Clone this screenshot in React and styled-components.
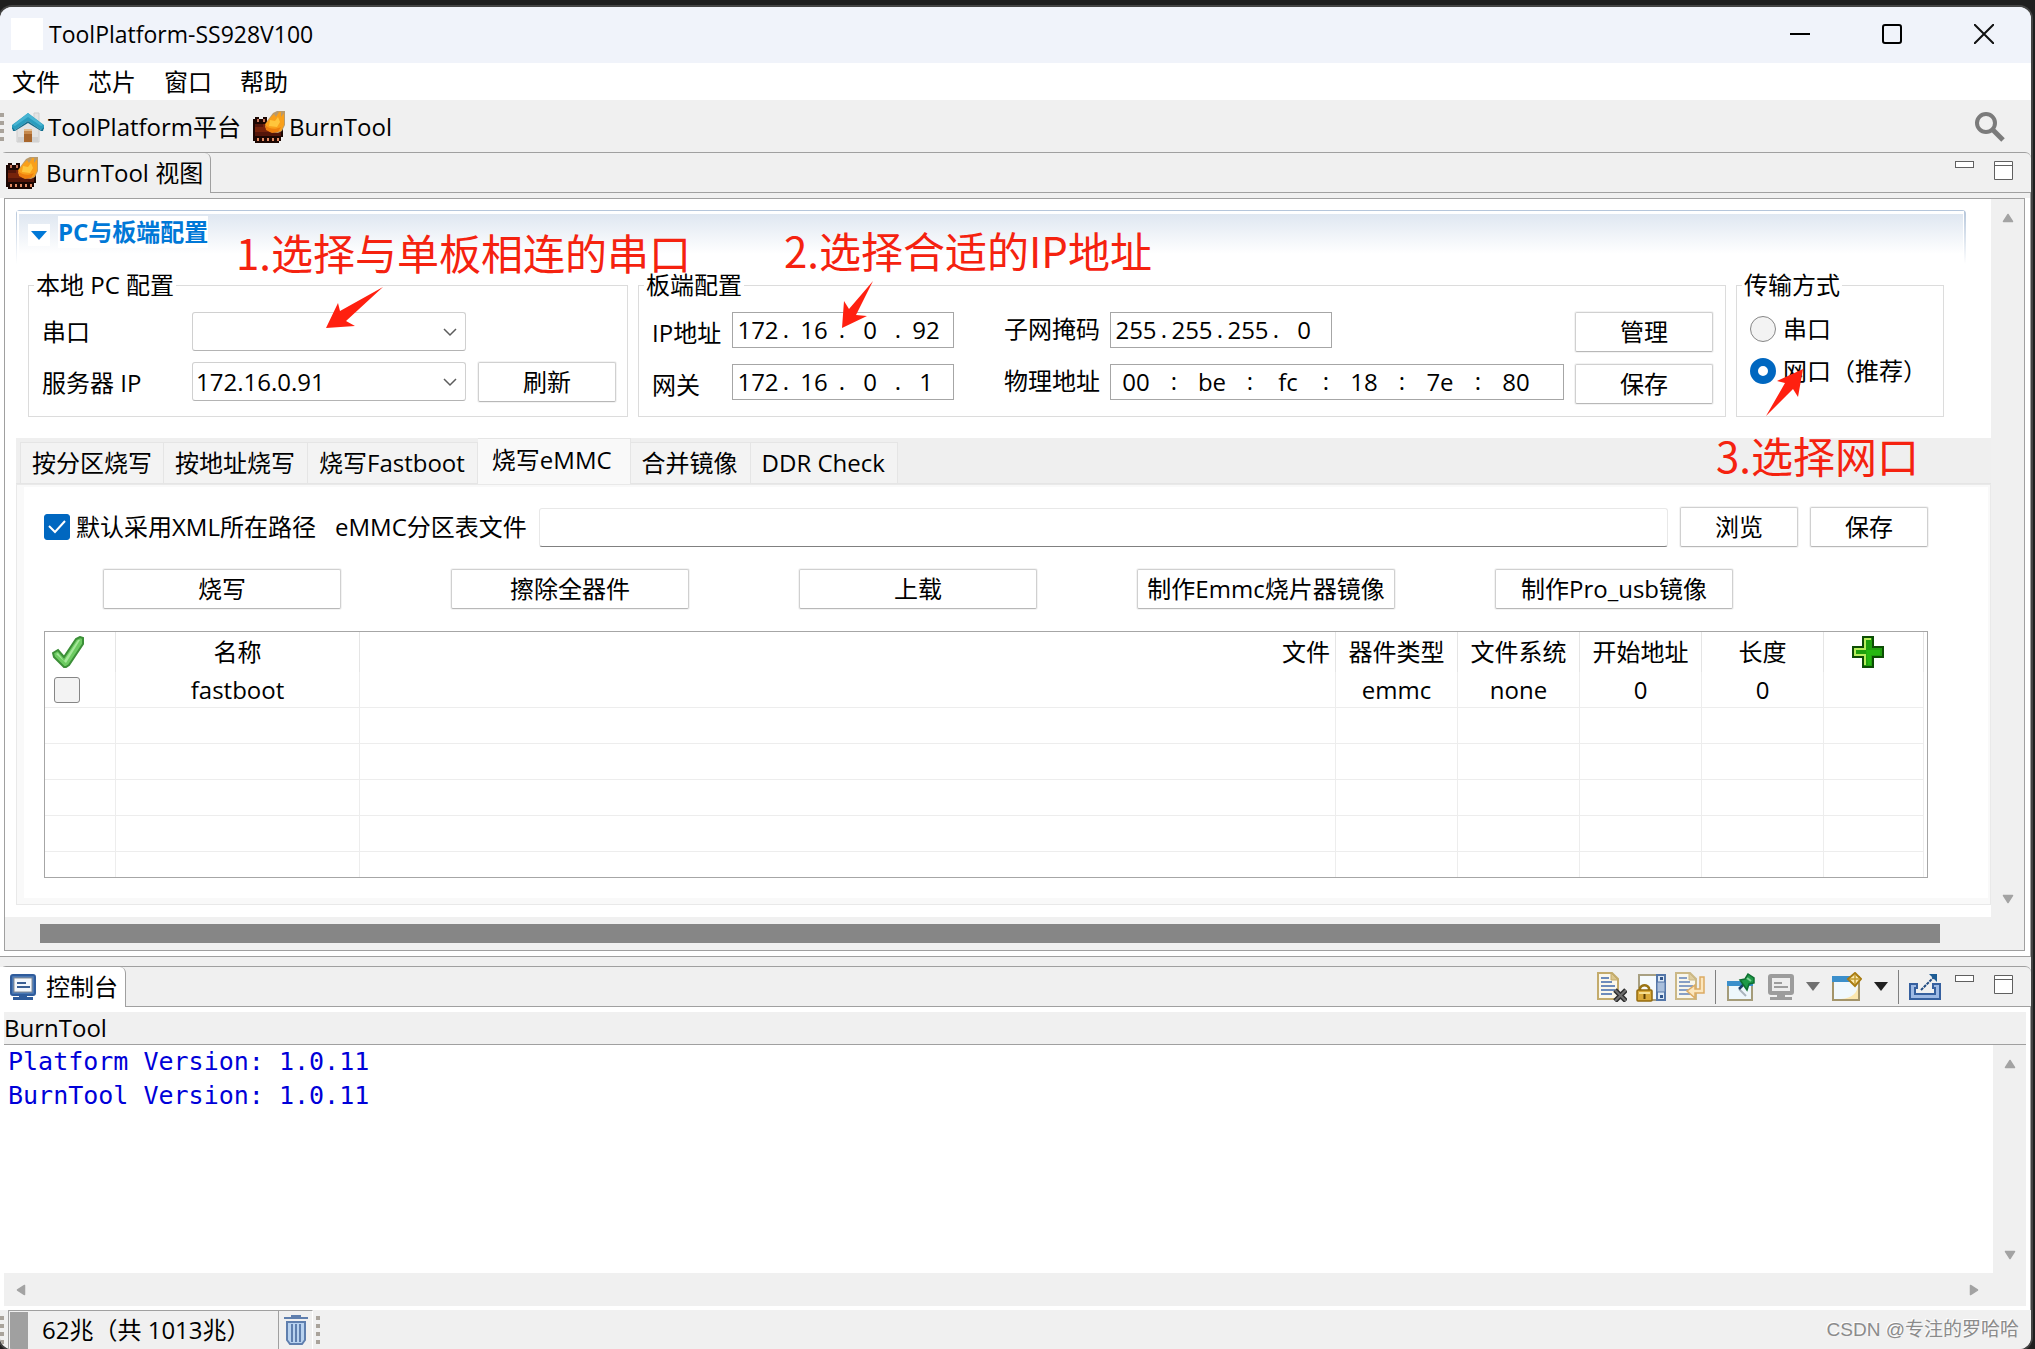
import React, { useState } from "react";
import styled, { createGlobalStyle, css } from "styled-components";

const GlobalStyle = createGlobalStyle`
  * { box-sizing: border-box; }
  html, body { margin: 0; background: #1f1f1f; }
  body, button, input, select {
    font-family: "Open Sans", "Noto Sans CJK SC", sans-serif;
    font-size: 24px;
    color: #000;
  }
`;

/* ---------- window frame ---------- */

const Desktop = styled.div`
  display: flex;
  min-height: 100vh;
  padding: 7px 4px 0 0;
  background: #1f1f1f;
`;

const Window = styled.div`
  flex: 1;
  min-width: 0;
  display: flex;
  flex-direction: column;
  background: #f0f0f0;
  border-radius: 12px;
  overflow: hidden;
  box-shadow: 0 0 0 2px #444;
`;

const TitleBar = styled.header`
  display: flex;
  align-items: center;
  height: 56px;
  padding: 0 17px 2px 11px;
  gap: 6px;
  background: #f0f3fa;
`;

const AppIcon = styled.span`
  width: 32px;
  height: 32px;
  background: #fff;
`;

const AppTitle = styled.h1`
  flex: 1;
  margin: 0;
  font-size: 23px;
  line-height: 34px;
  font-weight: 400;
`;

const WindowButtons = styled.div`
  display: flex;
  gap: 32px;
`;

const IconButton = styled.button`
  display: flex;
  align-items: center;
  justify-content: center;
  flex: none;
  width: ${(p) => p.$w || 32}px;
  height: ${(p) => p.$h || 32}px;
  padding: 0;
  border: 0;
  background: none;
`;

const MenuBar = styled.nav`
  display: flex;
  gap: 28px;
  height: 37px;
  padding: 0 12px;
  background: #fff;
`;

const MenuItem = styled.button`
  padding: 0;
  border: 0;
  background: none;
  line-height: 37px;
`;

const Toolbar = styled.div`
  display: flex;
  align-items: center;
  gap: 8px;
  height: 52px;
  padding: 2px 25px 0 0;
`;

const Grip = styled.span`
  width: 4px;
  height: 28px;
  background: repeating-linear-gradient(#a9a39b 0 4px, transparent 4px 8px);
`;

const ToolButton = styled.button`
  display: flex;
  align-items: center;
  gap: 4px;
  padding: 0 4px 0 0;
  border: 0;
  background: none;
  line-height: 36px;
`;

const Spacer = styled.span`
  flex: 1;
`;

/* ---------- view stacks ---------- */

const TabStrip = styled.div`
  display: flex;
  height: 41px;
  border-top: 1px solid #a0a0a0;
  border-radius: 6px 6px 0 0;
`;

const ViewTab = styled.div`
  display: flex;
  align-items: center;
  gap: ${(p) => p.$gap}px;
  padding: 0 7px 0 ${(p) => p.$left}px;
  border-right: 1px solid #a0a0a0;
  border-radius: 0 6px 0 0;
  background: ${(p) => p.$bg};
  line-height: 36px;
`;

const StripRest = styled.div`
  flex: 1;
  display: flex;
  align-items: center;
  justify-content: flex-end;
  gap: 10px;
  padding-right: 18px;
  border-bottom: 1px solid #a0a0a0;
`;

const StripSeparator = styled.span`
  width: 1px;
  height: 34px;
  background: #808080;
`;

const PaneButtons = styled.div`
  display: flex;
  gap: 20px;
  align-self: flex-start;
  padding: 8px 0 0 4px;
`;

const ViewBody = styled.div`
  padding: 5px 5px 5px 4px;
  background: linear-gradient(#f0f0f0 5px, #fff 5px);
  border-right: 1px solid #a0a0a0;
  border-bottom: 1px solid #a0a0a0;
`;

const ScrollFrame = styled.div`
  display: grid;
  grid-template-columns: minmax(0, 1fr) 33px;
  border: 1px solid #a0a0a0;
  background: #fff;
`;

const VScroll = styled.div`
  display: flex;
  flex-direction: column;
  align-items: center;
  justify-content: space-between;
  padding: 13px 0 12px;
  background: #f0f0f0;
`;

const HScroll = styled.div`
  grid-column: 1 / -1;
  height: 33px;
  padding: 7px 84px 7px 35px;
  background: #f0f0f0;
`;

const HThumb = styled.div`
  height: 19px;
  background: #868686;
`;

const FormPage = styled.div`
  padding: 11px 0 12px 11px;
`;

/* ---------- configuration section ---------- */

const Section = styled.section`
  margin-right: 25px;
`;

const SectionHead = styled.div`
  display: flex;
  align-items: flex-start;
  gap: 8px;
  height: 61px;
  padding: 6px 12px 0;
  border-radius: 4px 4px 0 0;
  background:
    linear-gradient(#b5c6db, #b5c6db) 0 0 / 100% 1px no-repeat,
    linear-gradient(#b5c6db, #fff) 0 0 / 1px 54px no-repeat,
    linear-gradient(#b5c6db, #fff) 100% 0 / 2px 54px no-repeat,
    linear-gradient(#dfe7f1, #fff) 50% 4px / calc(100% - 6px) 40px no-repeat,
    #fff;
`;

const Twistie = styled.button`
  display: flex;
  align-items: center;
  justify-content: center;
  width: 22px;
  height: 22px;
  margin-top: 8px;
  padding: 0;
  border: 0;
  background: #fff;
`;

const SectionTitle = styled.h2`
  margin: 0;
  background: #fff;
  color: #0078d7;
  font-size: 24px;
  line-height: 32px;
  font-weight: 700;
`;

const Groups = styled.div`
  display: grid;
  grid-template-columns: 600px minmax(0, 1fr) 208px;
  gap: 10px;
  padding: 0 22px 0 12px;
`;

const Group = styled.fieldset`
  position: relative;
  min-width: 0;
  margin: 0;
  padding: 13px ${(p) => p.$right}px 11px 13px;
  border: 1px solid #dcdcdc;
`;

const Legend = styled.legend`
  margin-left: -8px;
  padding: 0 2px;
  line-height: 28px;
`;

const LocalGrid = styled.div`
  display: grid;
  grid-template-columns: 150px 274px 1fr;
  grid-template-rows: 40px 41px;
  row-gap: 10px;
`;

const BoardGrid = styled.div`
  display: grid;
  grid-template-columns: 80px 222px 156px 222px minmax(0, 1fr) 138px;
  grid-template-rows: 41px 41px;
  row-gap: 11px;
`;

const Label = styled.label`
  align-self: center;
  line-height: 36px;
  white-space: nowrap;
`;

const MiddleLabel = styled(Label)`
  align-self: start;
  padding-left: 50px;
  line-height: 34px;
`;

const SelectBox = styled.div`
  display: grid;
  height: 39px;
  > * { grid-area: 1 / 1; }
  > svg { align-self: center; justify-self: end; margin-right: 9px; pointer-events: none; }
`;

const Select = styled.select`
  appearance: none;
  width: 100%;
  padding: 0 3px;
  border: 1px solid #d0d0d0;
  border-bottom-color: #b4b4b4;
  border-radius: 3px;
  background: #fff;
`;

const Button = styled.button`
  height: 40px;
  min-width: ${(p) => p.$w || 0}px;
  margin-left: ${(p) => p.$gap || 0}px;
  padding: 0 9px;
  border: 1px solid #d0d0d0;
  border-bottom-color: #b8b8b8;
  border-radius: 2px;
  background: #fff;
  box-shadow: 0 0 0 1px #f3f3f3;
  line-height: 36px;
  white-space: nowrap;
`;

const AddressBox = styled.div`
  display: flex;
  align-items: flex-start;
  height: 36px;
  padding-left: 2px;
  border: 1px solid #a6a6a6;
  background: #fff;
  grid-column: ${(p) => (p.$wide ? "span 2" : "auto")};
  margin-right: ${(p) => (p.$wide ? 11 : 0)}px;
  overflow: hidden;
`;

const Octet = styled.input`
  flex: none;
  width: 46px;
  height: 32px;
  padding: 0;
  border: 0;
  background: none;
  text-align: center;
`;

const Divider = styled.span`
  flex: none;
  width: ${(p) => p.$w}px;
  text-align: center;
  line-height: 32px;
`;

const RadioList = styled.div`
  display: flex;
  flex-direction: column;
  gap: 8px;
`;

const RadioRow = styled.label`
  display: flex;
  align-items: center;
  gap: 7px;
  height: 34px;
  line-height: 34px;
  white-space: nowrap;
`;

const Radio = styled.input`
  appearance: none;
  flex: none;
  width: 26px;
  height: 26px;
  margin: 0;
  border: 1px solid #868686;
  border-radius: 50%;
  background: #f3f3f3;
  &:checked {
    border: 8px solid #0067c0;
    background: #fff;
  }
`;

/* ---------- red hints drawn over the form ---------- */

const Hint = styled.strong`
  position: absolute;
  left: ${(p) => p.$x}px;
  top: ${(p) => p.$y}px;
  z-index: 2;
  color: #f5220f;
  font-family: "Noto Sans CJK SC", sans-serif;
  font-size: 42px;
  font-weight: 400;
  line-height: 42px;
  white-space: nowrap;
  pointer-events: none;
`;

const HintArrow = styled.svg`
  position: absolute;
  left: ${(p) => p.$x}px;
  top: ${(p) => p.$y}px;
  z-index: 2;
  fill: #ff2010;
  pointer-events: none;
`;

/* ---------- burn tabs ---------- */

const BurnTabs = styled.div`
  display: flex;
  align-items: flex-end;
  height: 46px;
  margin-top: 21px;
  padding-left: 4px;
  border-bottom: 1px solid #e5e5e5;
  background: #efefef;
`;

const BurnTab = styled.button`
  height: 41px;
  padding: 0 12px 0 11px;
  border: 1px solid #e5e5e5;
  border-left-width: 0;
  border-bottom: 0;
  background: #f3f3f3;
  line-height: 40px;
  white-space: nowrap;
  &:first-child { border-left-width: 1px; padding-right: 11px; }
  ${(p) =>
    p.$active &&
    css`
      height: 46px;
      margin-bottom: -1px;
      padding: 0 18px 4px 14px;
      background: #f9f9f9;
    `}
`;

const BurnPanel = styled.div`
  display: flex;
  flex-direction: column;
  padding: 20px 60px 20px 20px;
  border: solid #f9f9f9;
  border-width: 3px 3px 7px 8px;
  outline: 1px solid #e9e9e9;
  outline-offset: -1px;
  background: #fff;
`;

const FileRow = styled.div`
  display: flex;
  align-items: center;
  gap: 12px;
  height: 40px;
`;

const CheckLabel = styled.label`
  display: flex;
  align-items: center;
  gap: 6px;
  margin-right: 7px;
  line-height: 36px;
  white-space: nowrap;
`;

const CheckSlot = styled.span`
  display: grid;
  width: 26px;
  height: 26px;
  > * { grid-area: 1 / 1; }
  > svg { pointer-events: none; }
`;

const Checkbox = styled.input`
  appearance: none;
  display: block;
  width: 26px;
  height: 26px;
  margin: 0;
  border: 1px solid #868686;
  border-radius: 3px;
  background: #f3f3f3;
  &:checked {
    border-color: #0067c0;
    background: #0067c0;
  }
`;

const PathInput = styled.input`
  flex: 1;
  min-width: 0;
  height: 39px;
  padding: 0 6px;
  border: 1px solid #e8e8e8;
  border-bottom: 1px solid #808080;
  border-radius: 3px;
  background: #fff;
`;

const ActionRow = styled.div`
  display: grid;
  grid-template-columns: repeat(5, 1fr);
  justify-items: center;
  margin: 22px 0;
  padding: 0 140px 0 4px;
`;

const TableFrame = styled.div`
  height: 247px;
  padding-right: 3px;
  border: 1px solid #a6a6a6;
  overflow: hidden;
`;

const Table = styled.table`
  width: 100%;
  table-layout: fixed;
  border-collapse: separate;
  border-spacing: 0;
`;

const Th = styled.th`
  height: 40px;
  padding: ${(p) => (p.$align === "left" ? "0 0 0 7px" : "0 5px")};
  border-right: 1px solid #e5e5e5;
  font-weight: 400;
  line-height: 36px;
  text-align: ${(p) => p.$align || "center"};
  white-space: nowrap;
`;

const Td = styled.td`
  height: 36px;
  padding: ${(p) => (p.$align === "left" ? "0 0 0 9px" : "0")};
  border-right: 1px solid #ededed;
  border-bottom: 1px solid #ededed;
  line-height: 34px;
  text-align: ${(p) => p.$align || "center"};
`;

const HeadIcon = styled.span`
  display: flex;
  padding-left: ${(p) => p.$left || 0}px;
`;

/* ---------- console ---------- */

const ConsoleStrip = styled(TabStrip)`
  margin-top: 9px;
`;

const ConsoleTools = styled.div`
  display: flex;
  align-items: center;
  gap: ${(p) => p.$gap}px;
`;

const ConsoleBody = styled.div`
  flex: 1;
  display: flex;
  flex-direction: column;
  padding: 5px 4px 4px;
  background: #fff;
  border-right: 1px solid #a0a0a0;
`;

const ConsoleName = styled.div`
  height: 33px;
  border-bottom: 1px solid #a0a0a0;
  background: #f0f0f0;
  line-height: 32px;
`;

const ConsoleScroll = styled.div`
  flex: 1;
  display: grid;
  grid-template-columns: minmax(0, 1fr) 33px;
  grid-template-rows: 1fr 33px;
`;

const ConsoleText = styled.pre`
  margin: 0;
  padding: 0 4px;
  color: #0000d8;
  font-family: "DejaVu Sans Mono", monospace;
  font-size: 25px;
  line-height: 34px;
`;

const ConsoleHScroll = styled.div`
  grid-column: 1 / -1;
  display: flex;
  align-items: center;
  justify-content: space-between;
  padding: 0 46px 0 11px;
  background: #f0f0f0;
`;

const StatusBar = styled.footer`
  display: flex;
  align-items: center;
  height: 39px;
  padding-right: 12px;
  background: #f0f0f0;
`;

const Heap = styled.div`
  display: flex;
  align-items: center;
  align-self: stretch;
  width: 271px;
  margin-left: 4px;
  border: 1px solid #a0a0a0;
  border-bottom: 0;
`;

const HeapUsed = styled.span`
  align-self: stretch;
  width: 18px;
  margin: 1px 14px 0 1px;
  background: #a0a0a0;
`;

const HeapText = styled.span`
  line-height: 36px;
  white-space: nowrap;
`;

const TrashSlot = styled.div`
  display: flex;
  align-items: center;
  align-self: stretch;
  width: 34px;
  margin-right: 3px;
  padding-left: 5px;
  border-top: 1px solid #a0a0a0;
  border-right: 1px solid #fff;
`;

const Watermark = styled.span`
  color: #8b8b8b;
  font-family: "Liberation Sans", "Noto Sans CJK SC", sans-serif;
  font-size: 19px;
  line-height: 36px;
  text-shadow: -1px -1px 0 #fff;
`;

/* ---------- icons ---------- */

const HomeIcon = () => (
  <svg width="32" height="32" viewBox="0 0 32 32" aria-hidden="true">
    <path d="M22 2h5v11h-5z" fill="#e4e4e4" stroke="#cfcfcf" />
    <path d="M5 14 16 5l11 9v17H5z" fill="#e3e3e3" stroke="#cdcdcd" />
    <path d="M6 26h20v5H6z" fill="#d2d2d2" />
    <path d="M16 2 0 14v4l3 1L16 10l13 9 3-1v-4z" fill="#2a9dbe" />
    <path d="M16 2 1 14l2 1L16 6l13 9 2-1z" fill="#48b4d2" />
    <path d="M0 16l3 3L16 10l13 9 3-3-1 4-2 0L16 12 3 20l-2 0z" fill="#146f8f" />
    <rect x="12" y="18" width="8" height="13" fill="#c78a4e" />
    <rect x="12" y="23" width="8" height="8" fill="#a8662c" />
    <rect x="12" y="18" width="8" height="2" fill="#e2bd90" />
  </svg>
);

const BurnIcon = () => (
  <svg width="32" height="32" viewBox="0 0 32 32" aria-hidden="true">
    <path d="M0 8h2V6h4v2h4V6h4v4h6l10 6v10h-2v4h-2v2H2v-2H0z" fill="#1c0703" />
    <path d="M2 13h14l12 5v7H2z" fill="#76230b" />
    <path d="M2 13h8v3H2zM2 21h26v4H2z" fill="#54160a" />
    <path d="M4 8h2v3H4zM10 8h2v3h-2z" fill="#c9785c" />
    <path d="M4 27h2v3H4zM9 27h2v3H9zM14 27h2v3h-2zM19 27h2v3h-2zM24 27h2v3h-2z" fill="#e28a62" />
    <path d="M17 6 20 2 24 0h8v14l-3 6-4 2-8-1-5-5 2-6z" fill="#b99a6b" />
    <path d="M17 7l4-4 2 3 3-5h2v5l3-4v12l-3 6-6 1-7-2-3-6 3-3z" fill="#f9a01b" />
    <path d="M17 9l5 1 3-4 2 5-3 5-8-1z" fill="#ffc63c" />
    <path d="M12 14c4 4 10 5 16 2l-3 5-6 1-6-3z" fill="#ee7f0e" />
  </svg>
);

const SearchIcon = () => (
  <svg width="32" height="32" viewBox="0 0 32 32" fill="none" stroke="#7b7b7b" aria-hidden="true">
    <circle cx="12" cy="12" r="9" strokeWidth="4" />
    <path d="M18 18 29 29" strokeWidth="5" />
  </svg>
);

const MinimizeIcon = () => (
  <svg width="20" height="20" viewBox="0 0 20 20" aria-hidden="true">
    <path d="M0 10h20" stroke="#000" strokeWidth="2" />
  </svg>
);

const MaximizeIcon = () => (
  <svg width="20" height="20" viewBox="0 0 20 20" aria-hidden="true">
    <rect x="1" y="1" width="18" height="18" rx="2" fill="none" stroke="#000" strokeWidth="2" />
  </svg>
);

const CloseIcon = () => (
  <svg width="20" height="20" viewBox="0 0 20 20" aria-hidden="true">
    <path d="M0 0 20 20M20 0 0 20" stroke="#111" strokeWidth="2" />
  </svg>
);

const PaneMinIcon = () => (
  <svg width="19" height="19" viewBox="0 0 19 19" aria-hidden="true">
    <rect x=".5" y=".5" width="18" height="6" fill="#fff" stroke="#606060" />
  </svg>
);

const PaneMaxIcon = () => (
  <svg width="19" height="19" viewBox="0 0 19 19" aria-hidden="true">
    <path d="M.5.5h18v18H.5zM.5 4.500h18" fill="#fff" stroke="#606060" />
  </svg>
);

const rotations = { up: 0, right: 90, down: 180, left: 270 };
const ScrollArrow = ({ dir }) => (
  <svg width="12" height="12" viewBox="0 0 12 12" aria-hidden="true">
    <path
      d="M6 2.500 10.500 9.500h-9z"
      fill="#a3a3a3"
      stroke="#a3a3a3"
      strokeWidth="1.500"
      strokeLinejoin="round"
      transform={`rotate(${rotations[dir]} 6 6)`}
    />
  </svg>
);

const ChevronIcon = () => (
  <svg width="14" height="10" viewBox="0 0 14 10" fill="none" aria-hidden="true">
    <path d="M1 2 7 8 13 2" stroke="#5c5c5c" strokeWidth="1.500" />
  </svg>
);

const TwistieIcon = () => (
  <svg width="16" height="9" viewBox="0 0 16 9" aria-hidden="true">
    <path d="M0 0h16L8 9z" fill="#0078d7" />
  </svg>
);

const TickIcon = () => (
  <svg width="26" height="26" viewBox="0 0 26 26" fill="none" aria-hidden="true">
    <path d="M5 12 11 18 21 7" stroke="#fff" strokeWidth="2" />
  </svg>
);

const GreenCheckIcon = () => (
  <svg width="32" height="32" viewBox="0 0 32 32" aria-hidden="true">
    <path d="M1 17 6 14l6 7L24 3l4-2 3 1v6L17 29l-3 2h-2L2 21z" fill="#6dcb62" stroke="#3c8f38" strokeWidth="2" />
    <path d="M4 18l2-1 6 8L26 4h2L14 27z" fill="#a5e79a" />
  </svg>
);

const GreenPlusIcon = () => (
  <svg width="32" height="32" viewBox="0 0 32 32" aria-hidden="true">
    <path d="M11 1h10v10h10v10H21v10H11V21H1V11h10z" fill="#1fa00d" stroke="#0c4d05" strokeWidth="2" />
    <path d="M13 29V19H3v-6h10V3h6" fill="none" stroke="#b6ee5c" strokeWidth="2" />
    <path d="M14 14h14v5h-9v10h-3z" fill="#26b811" />
  </svg>
);

const ConsoleIcon = () => (
  <svg width="26" height="26" viewBox="0 0 26 26" aria-hidden="true">
    <rect x="1" y="1" width="24" height="20" rx="2" fill="#4a78b5" stroke="#2f5c9c" strokeWidth="2" />
    <rect x="4" y="4" width="18" height="14" fill="#f4f8fd" stroke="#8a8f96" />
    <path d="M7 9h9M7 13h13" stroke="#3a5f94" strokeWidth="2" />
    <path d="M9 22h8v1h6v3H3v-3h6z" fill="#2f5c9c" />
  </svg>
);

const Page = () => (
  <>
    <path d="M1 1h14l6 6v20H1z" fill="#fbf8ec" stroke="#c3ab6c" strokeWidth="2" />
    <path d="M14 1v7h7z" fill="#dcc68c" stroke="#c3ab6c" />
    <path d="M4 6h8M4 10h11M4 14h14M4 18h14M4 22h11" stroke="#6d8cbb" strokeWidth="2" />
  </>
);

const ClearIcon = () => (
  <svg width="30" height="30" viewBox="0 0 30 30" aria-hidden="true">
    <Page />
    <path d="M18 18 29 29M29 18 18 29" stroke="#2e2e2e" strokeWidth="5" />
    <path d="M18 18 29 29M29 18 18 29" stroke="#6e6e6e" strokeWidth="2" />
  </svg>
);

const LockIcon = () => (
  <svg width="30" height="30" viewBox="0 0 30 30" aria-hidden="true">
    <rect x="3" y="3" width="26" height="25" fill="#f5fafd" stroke="#a8a082" strokeWidth="2" />
    <path d="M21 3v25h8V3z" fill="#dce8f5" stroke="#5476a8" strokeWidth="2" />
    <path d="M21 10h8v10h-8z" fill="#a9bfdc" stroke="#5476a8" />
    <path d="M24 5h3v3h-3zM24 23h3v3h-3z" fill="#31568c" />
    <path d="M4 19v-3a5 5 0 0 1 9 0v3" fill="none" stroke="#9a7414" strokeWidth="2.500" />
    <rect x="1" y="18" width="15" height="11" rx="1" fill="#d9a93a" stroke="#92690e" strokeWidth="1.500" />
    <path d="M3 21h11" stroke="#f6de90" strokeWidth="2" />
    <path d="M8.500 22v5" stroke="#5b3f05" strokeWidth="2" />
  </svg>
);

const WrapIcon = () => (
  <svg width="30" height="30" viewBox="0 0 30 30" aria-hidden="true">
    <g opacity=".8"><Page /></g>
    <path d="M25 5h4v16h-9v5l-8-7 8-6v4h5z" fill="#fbe6bd" stroke="#dcab63" strokeWidth="1.500" />
  </svg>
);

const PinIcon = () => (
  <svg width="30" height="30" viewBox="0 0 30 30" aria-hidden="true">
    <rect x="2" y="10" width="24" height="18" fill="#eef7fc" stroke="#a59c7a" strokeWidth="2" />
    <rect x="1" y="9" width="26" height="5" fill="#3b8fcb" />
    <path d="M13 17 20 24" stroke="#a9b4bd" strokeWidth="2" />
    <path d="M13 17l5-5" stroke="#1d3f66" strokeWidth="2.500" />
    <path d="M14 8l5-1 3-5 6 4 0 5-5 1-2 6z" fill="#1f9a48" stroke="#0e6f30" strokeWidth="1.500" />
    <path d="M21 6l4 3" stroke="#7fd497" strokeWidth="2" />
  </svg>
);

const MonitorIcon = () => (
  <svg width="26" height="26" viewBox="0 0 26 26" aria-hidden="true">
    <rect x="2" y="2" width="22" height="17" rx="1" fill="#ededed" stroke="#9c9c9c" strokeWidth="4" />
    <path d="M6 9h8M6 13h14" stroke="#9c9c9c" strokeWidth="2" />
    <path d="M9 20h8v3h7v3H2v-3h7z" fill="#9c9c9c" />
  </svg>
);

const NewConsoleIcon = () => (
  <svg width="30" height="30" viewBox="0 0 30 30" aria-hidden="true">
    <rect x="1" y="5" width="26" height="23" fill="#f0f8fd" stroke="#a3946a" strokeWidth="2" />
    <path d="M26 12c0 9-6 14-17 15h17z" fill="#fbe7b0" />
    <rect x="0" y="4" width="20" height="6" fill="#3b8fcb" />
    <path d="M23 1 29 7 23 14 16 7z" fill="#fbe9ae" stroke="#a87c12" strokeWidth="2" />
    <path d="M23 3v9M18 7h10" stroke="#c29a2e" strokeWidth="1.500" />
  </svg>
);

const DropIcon = ({ color }) => (
  <svg width="14" height="9" viewBox="0 0 14 9" aria-hidden="true">
    <path d="M0 0h14L7 9z" fill={color} />
  </svg>
);

const ExportIcon = () => (
  <svg width="32" height="28" viewBox="0 0 32 28" aria-hidden="true">
    <path d="M1 11h7v4H6v6h20v-6h-2v-4h7v15H1z" fill="#9db9e4" stroke="#36609f" strokeWidth="2" />
    <path d="M12 17 25 4" stroke="#1f4a80" strokeWidth="2" strokeDasharray="3 1" />
    <path d="M20 1h8v8z" fill="#1d5c94" />
  </svg>
);

const TrashIcon = () => (
  <svg width="24" height="30" viewBox="0 0 24 30" aria-hidden="true">
    <path d="M0 3h24M7 1h10" stroke="#5f7fae" strokeWidth="2" />
    <path d="M3 7h18v18l-3 4H6l-3-4z" fill="#b8d2ef" stroke="#5f7fae" strokeWidth="2" />
    <path d="M8 9v18M12 9v18M16 9v18" stroke="#5f7fae" strokeWidth="2" />
  </svg>
);

/* ---------- pieces ---------- */

const burnTabs = ["按分区烧写", "按地址烧写", "烧写Fastboot", "烧写eMMC", "合并镜像", "DDR Check"];

const actions = [
  { text: "烧写", w: 238 },
  { text: "擦除全器件", w: 238 },
  { text: "上载", w: 238 },
  { text: "制作Emmc烧片器镜像", w: 258 },
  { text: "制作Pro_usb镜像", w: 238 },
];

const columnWidths = [71, 244, null, 122, 122, 122, 122, 100];

function Address({ id, label, parts, mark, markWidth, wide }) {
  return (
    <AddressBox $wide={wide}>
      {parts.map((value, i) => (
        <React.Fragment key={i}>
          {i > 0 && <Divider $w={markWidth}>{mark}</Divider>}
          <Octet id={i === 0 ? id : undefined} aria-label={`${label} ${i + 1}`} defaultValue={value} />
        </React.Fragment>
      ))}
    </AddressBox>
  );
}

function PaneControls() {
  return (
    <PaneButtons>
      <IconButton $w={19} $h={19} aria-label="最小化"><PaneMinIcon /></IconButton>
      <IconButton $w={19} $h={19} aria-label="最大化"><PaneMaxIcon /></IconButton>
    </PaneButtons>
  );
}

function LocalGroup() {
  return (
    <Group $right={11}>
      <Legend>本地 PC 配置</Legend>
      <LocalGrid>
        <Label htmlFor="port">串口</Label>
        <SelectBox>
          <Select id="port" defaultValue=""><option value="" /></Select>
          <ChevronIcon />
        </SelectBox>
        <span />
        <Label htmlFor="server">服务器 IP</Label>
        <SelectBox>
          <Select id="server"><option>172.16.0.91</option></Select>
          <ChevronIcon />
        </SelectBox>
        <Button $gap={12}>刷新</Button>
      </LocalGrid>
      <Hint $x={207} $y={-68}>1.选择与单板相连的串口</Hint>
      <HintArrow $x={297} $y={-12} width="60" height="42" viewBox="0 0 60 42">
        <path d="M0 41 12 16l2 8L57 0 20 34l9 5z" />
      </HintArrow>
    </Group>
  );
}

function BoardGroup() {
  return (
    <Group $right={12}>
      <Legend>板端配置</Legend>
      <BoardGrid>
        <Label htmlFor="ip">IP地址</Label>
        <Address id="ip" label="IP地址" parts={["172", "16", "0", "92"]} mark="." markWidth={10} />
        <MiddleLabel htmlFor="mask">子网掩码</MiddleLabel>
        <Address id="mask" label="子网掩码" parts={["255", "255", "255", "0"]} mark="." markWidth={10} />
        <span />
        <Button>管理</Button>
        <Label htmlFor="gateway">网关</Label>
        <Address id="gateway" label="网关" parts={["172", "16", "0", "1"]} mark="." markWidth={10} />
        <MiddleLabel htmlFor="mac">物理地址</MiddleLabel>
        <Address id="mac" label="物理地址" parts={["00", "be", "fc", "18", "7e", "80"]} mark=":" markWidth={30} wide />
        <Button>保存</Button>
      </BoardGrid>
      <Hint $x={145} $y={-70}>2.选择合适的IP地址</Hint>
      <HintArrow $x={203} $y={-18} width="33" height="48" viewBox="0 0 33 48">
        <path d="M0 47 2 20l5 8L31 0 14 34l11 1z" />
      </HintArrow>
    </Group>
  );
}

function TransferGroup() {
  return (
    <Group $right={0}>
      <Legend>传输方式</Legend>
      <RadioList>
        <RadioRow><Radio type="radio" name="transfer" />串口</RadioRow>
        <RadioRow><Radio type="radio" name="transfer" defaultChecked />网口（推荐）</RadioRow>
      </RadioList>
      <Hint $x={-21} $y={135}>3.选择网口</Hint>
      <HintArrow $x={29} $y={70} width="38" height="48" viewBox="0 0 38 48">
        <path d="M0 47 19 14l-8-2L37 0 32 28l-5-8z" />
      </HintArrow>
    </Group>
  );
}

function PartitionTable() {
  return (
    <TableFrame>
      <Table>
        <colgroup>
          {columnWidths.map((w, i) => (
            <col key={i} width={w || undefined} />
          ))}
        </colgroup>
        <thead>
          <tr>
            <Th $align="left"><HeadIcon><GreenCheckIcon /></HeadIcon></Th>
            <Th>名称</Th>
            <Th $align="right">文件</Th>
            <Th>器件类型</Th>
            <Th>文件系统</Th>
            <Th>开始地址</Th>
            <Th>长度</Th>
            <Th $align="left"><HeadIcon $left={21}><GreenPlusIcon /></HeadIcon></Th>
          </tr>
        </thead>
        <tbody>
          <tr>
            <Td $align="left"><Checkbox type="checkbox" aria-label="fastboot" /></Td>
            <Td>fastboot</Td>
            <Td />
            <Td>emmc</Td>
            <Td>none</Td>
            <Td>0</Td>
            <Td>0</Td>
            <Td />
          </tr>
          {[0, 1, 2, 3, 4].map((r) => (
            <tr key={r}>
              {columnWidths.map((_, i) => <Td key={i} />)}
            </tr>
          ))}
        </tbody>
      </Table>
    </TableFrame>
  );
}

export default function App() {
  const [active, setActive] = useState(3);
  return (
    <>
      <GlobalStyle />
      <Desktop>
        <Window>
          <TitleBar>
            <AppIcon />
            <AppTitle>ToolPlatform-SS928V100</AppTitle>
            <WindowButtons>
              <IconButton $w={60} aria-label="最小化"><MinimizeIcon /></IconButton>
              <IconButton $w={60} aria-label="最大化"><MaximizeIcon /></IconButton>
              <IconButton $w={60} aria-label="关闭"><CloseIcon /></IconButton>
            </WindowButtons>
          </TitleBar>

          <MenuBar>
            {["文件", "芯片", "窗口", "帮助"].map((m) => <MenuItem key={m}>{m}</MenuItem>)}
          </MenuBar>

          <Toolbar>
            <Grip />
            <ToolButton><HomeIcon />ToolPlatform平台</ToolButton>
            <ToolButton><BurnIcon />BurnTool</ToolButton>
            <Spacer />
            <IconButton aria-label="搜索"><SearchIcon /></IconButton>
          </Toolbar>

          <TabStrip>
            <ViewTab $left={6} $gap={8} $bg="#f0f0f0"><BurnIcon />BurnTool 视图</ViewTab>
            <StripRest><PaneControls /></StripRest>
          </TabStrip>

          <ViewBody>
            <ScrollFrame>
              <FormPage>
                <Section>
                  <SectionHead>
                    <Twistie aria-label="折叠"><TwistieIcon /></Twistie>
                    <SectionTitle>PC与板端配置</SectionTitle>
                  </SectionHead>
                  <Groups>
                    <LocalGroup />
                    <BoardGroup />
                    <TransferGroup />
                  </Groups>
                </Section>

                <BurnTabs role="tablist">
                  {burnTabs.map((t, i) => (
                    <BurnTab key={t} role="tab" aria-selected={i === active} $active={i === active} onClick={() => setActive(i)}>
                      {t}
                    </BurnTab>
                  ))}
                </BurnTabs>
                <BurnPanel>
                  <FileRow>
                    <CheckLabel>
                      <CheckSlot>
                        <Checkbox type="checkbox" defaultChecked />
                        <TickIcon />
                      </CheckSlot>
                      默认采用XML所在路径
                    </CheckLabel>
                    <Label htmlFor="xml">eMMC分区表文件</Label>
                    <PathInput id="xml" type="text" />
                    <Button $w={118}>浏览</Button>
                    <Button $w={118}>保存</Button>
                  </FileRow>
                  <ActionRow>
                    {actions.map((a) => <Button key={a.text} $w={a.w}>{a.text}</Button>)}
                  </ActionRow>
                  <PartitionTable />
                </BurnPanel>
              </FormPage>
              <VScroll>
                <ScrollArrow dir="up" />
                <ScrollArrow dir="down" />
              </VScroll>
              <HScroll><HThumb /></HScroll>
            </ScrollFrame>
          </ViewBody>

          <ConsoleStrip>
            <ViewTab $left={10} $gap={10} $bg="#fff"><ConsoleIcon />控制台</ViewTab>
            <StripRest>
              <ConsoleTools $gap={9}>
                <IconButton $w={30} aria-label="清除控制台"><ClearIcon /></IconButton>
                <IconButton $w={30} aria-label="滚动锁定"><LockIcon /></IconButton>
                <IconButton $w={30} aria-label="自动换行"><WrapIcon /></IconButton>
              </ConsoleTools>
              <StripSeparator />
              <ConsoleTools $gap={12}>
                <IconButton $w={30} aria-label="固定控制台"><PinIcon /></IconButton>
                <IconButton $w={26} aria-label="显示控制台"><MonitorIcon /></IconButton>
                <IconButton $w={14} aria-label="控制台列表"><DropIcon color="#707070" /></IconButton>
                <IconButton $w={30} aria-label="打开控制台"><NewConsoleIcon /></IconButton>
                <IconButton $w={14} aria-label="打开控制台列表"><DropIcon color="#202020" /></IconButton>
              </ConsoleTools>
              <StripSeparator />
              <IconButton aria-label="导出"><ExportIcon /></IconButton>
              <PaneControls />
            </StripRest>
          </ConsoleStrip>

          <ConsoleBody>
            <ConsoleName>BurnTool</ConsoleName>
            <ConsoleScroll>
              <ConsoleText>{"Platform Version: 1.0.11\nBurnTool Version: 1.0.11"}</ConsoleText>
              <VScroll>
                <ScrollArrow dir="up" />
                <ScrollArrow dir="down" />
              </VScroll>
              <ConsoleHScroll>
                <ScrollArrow dir="left" />
                <ScrollArrow dir="right" />
              </ConsoleHScroll>
            </ConsoleScroll>
          </ConsoleBody>

          <StatusBar>
            <Grip />
            <Heap>
              <HeapUsed />
              <HeapText>62兆（共 1013兆）</HeapText>
            </Heap>
            <TrashSlot>
              <IconButton $w={24} $h={30} aria-label="运行垃圾回收"><TrashIcon /></IconButton>
            </TrashSlot>
            <Grip />
            <Spacer />
            <Watermark>CSDN @专注的罗哈哈</Watermark>
          </StatusBar>
        </Window>
      </Desktop>
    </>
  );
}
